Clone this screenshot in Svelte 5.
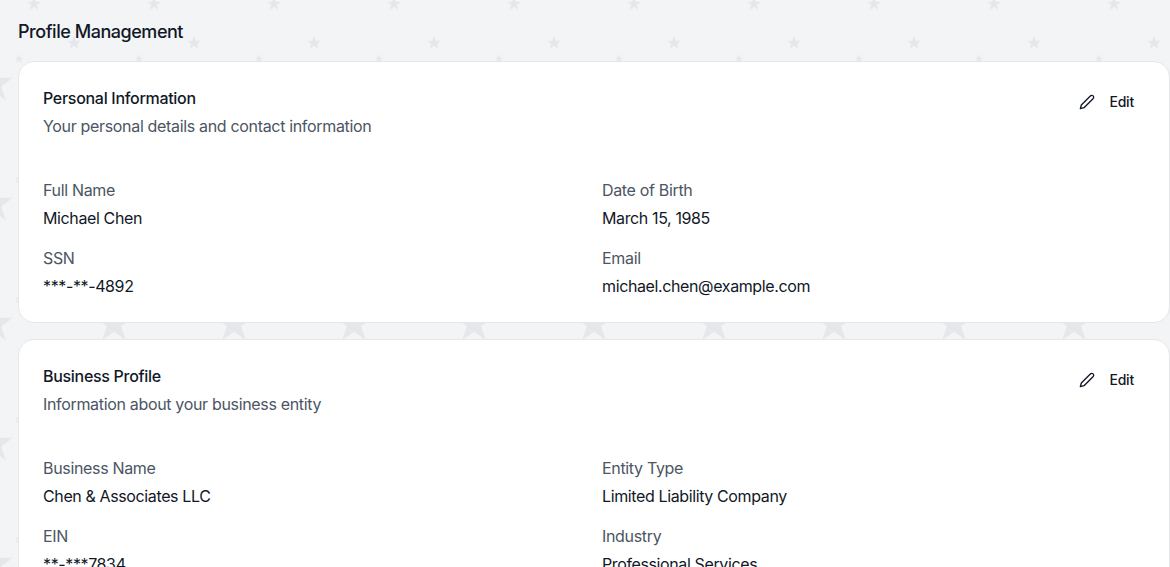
<script>
	const sections = [
		{
			title: "Personal Information",
			description: "Your personal details and contact information",
			fields: [
				{ label: "Full Name", value: "Michael Chen" },
				{ label: "Date of Birth", value: "March 15, 1985" },
				{ label: "SSN", value: "***-**-4892" },
				{ label: "Email", value: "michael.chen@example.com" }
			]
		},
		{
			title: "Business Profile",
			description: "Information about your business entity",
			fields: [
				{ label: "Business Name", value: "Chen & Associates LLC" },
				{ label: "Entity Type", value: "Limited Liability Company" },
				{ label: "EIN", value: "**-***7834" },
				{ label: "Industry", value: "Professional Services" }
			]
		}
	];
</script>

<main class="page">
	<h1>Profile Management</h1>

	{#each sections as section}
		<section class="card">
			<header class="card-head">
				<div>
					<h2>{section.title}</h2>
					<p>{section.description}</p>
				</div>
				<button type="button" class="edit">
					<svg viewBox="0 0 24 24" width="16" height="16" fill="none" stroke="currentColor" stroke-width="2" stroke-linecap="round" stroke-linejoin="round" aria-hidden="true">
						<path d="M17 3a2.85 2.83 0 1 1 4 4L7.5 20.5 2 22l1.5-5.5Z" />
					</svg>
					Edit
				</button>
			</header>

			<dl class="fields">
				{#each section.fields as field}
					<div>
						<dt>{field.label}</dt>
						<dd>{field.value}</dd>
					</div>
				{/each}
			</dl>
		</section>
	{/each}
</main>

<style>
	:global(body) {
		margin: 0;
		overflow: hidden;
	}

	.page {
		box-sizing: border-box;
		height: 100vh;
		overflow: hidden;
		padding: 18px 0 0 18px;
		font-family: Inter, "Liberation Sans", sans-serif;
		letter-spacing: -0.33px;
		color: #111827;
		background-color: #f3f4f6;
		/* star tile, drawn twice where a star crosses the tile edge */
		background-image: url("data:image/svg+xml,%3Csvg xmlns='http://www.w3.org/2000/svg' width='120' height='120'%3E%3Cdefs%3E%3Cpath id='s' d='M0-1 .225-.309.951-.309.363.118.588.809 0 .382-.588.809-.363.118-.951-.309-.225-.309Z'/%3E%3C/defs%3E%3Cg fill='%23e5e7eb'%3E%3Cuse href='%23s' transform='translate(34 4) scale(7.5)'/%3E%3Cuse href='%23s' transform='translate(34 124) scale(7.5)'/%3E%3Cuse href='%23s' transform='translate(74 43) scale(7.5)'/%3E%3Cuse href='%23s' transform='translate(19 59) scale(5)'/%3E%3Cuse href='%23s' transform='translate(114 84) scale(20)'/%3E%3Cuse href='%23s' transform='translate(-6 84) scale(20)'/%3E%3C/g%3E%3C/svg%3E");
	}

	h1 {
		margin: 0 0 15px;
		font-size: 18px;
		line-height: 28px;
		font-weight: 500;
		letter-spacing: -0.46px;
	}

	.card {
		margin-bottom: 16px;
		padding: 24px;
		background: #fff;
		border: 1px solid #e5e7eb;
		border-radius: 16px;
	}

	.card-head {
		display: flex;
		justify-content: space-between;
		align-items: flex-start;
		margin-bottom: 40px;
	}

	h2 {
		margin: 0 0 4px;
		font-size: 16px;
		line-height: 24px;
		font-weight: 500;
		letter-spacing: -0.3px;
	}

	.card-head p {
		margin: 0;
		font-size: 16px;
		line-height: 24px;
		color: #4b5563;
	}

	.edit {
		display: flex;
		align-items: center;
		gap: 14px;
		padding: 8px 11px 8px 12px;
		margin-top: -2px;
		border: 0;
		background: none;
		font: 500 14px/20px Inter, "Liberation Sans", sans-serif;
		letter-spacing: -0.2px;
		color: #111827;
	}

	.fields {
		display: grid;
		grid-template-columns: 1fr 1fr;
		gap: 16px;
		margin: 0;
	}

	dt {
		margin-bottom: 4px;
		font-size: 16px;
		line-height: 24px;
		color: #4b5563;
	}

	dd {
		margin: 0;
		font-size: 16px;
		line-height: 24px;
		letter-spacing: -0.38px;
	}
</style>
